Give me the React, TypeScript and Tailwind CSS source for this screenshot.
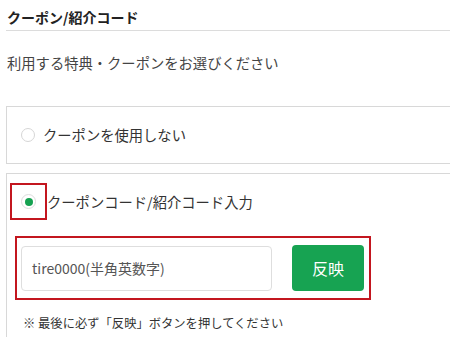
import React from "react";

export default function App() {
  const font = { fontFamily: '"Noto Sans CJK JP", "Noto Sans", sans-serif' };
  return (
    <div className="w-[450px] h-[337px] overflow-hidden bg-white" style={font}>
      <div className="w-[480px] pl-[6px]">
        <div className="h-[31px] border-b border-[#dcdcdc] pl-[1px] pt-[4px]">
          <span className="text-[14px] font-bold text-[#222] leading-[20px]">クーポン/紹介コード</span>
        </div>
        <div className="pl-[1px] pt-[22px] text-[14.3px] leading-[20px] text-[#444]">
          利用する特典・クーポンをお選びください
        </div>
        <div className="mt-[33px] h-[58px] border border-[#d8d8d8] flex items-center pl-[14px]">
          <span className="w-[14px] h-[14px] rounded-full border border-[#d6d6d6] bg-white" />
          <span className="ml-[8px] text-[14.3px] text-[#333] leading-[20px]">クーポンを使用しない</span>
        </div>
        <div className="mt-[9px] border-t border-l border-[#d8d8d8] pt-[9px] pl-[3px] h-[200px]">
          <div className="flex items-center">
            <div className="w-[37px] h-[37px] border-[2px] border-[#c3161f] flex items-center justify-center">
              <span className="w-[15px] h-[15px] rounded-full border border-[#dcdcdc] flex items-center justify-center bg-white">
                <span className="w-[8px] h-[8px] rounded-full bg-[#15a150]" />
              </span>
            </div>
            <span className="ml-[0px] text-[14.3px] text-[#333] leading-[20px]">クーポンコード/紹介コード入力</span>
          </div>
          <div className="mt-[16px] ml-[5px] w-[356px] h-[64px] border-[2px] border-[#c3161f] flex items-center pl-[4px] pr-[4px] gap-[20px]">
            <div className="w-[251px] h-[45px] border border-[#dedede] rounded-[4px] flex items-center pl-[10px] text-[14px] text-[#555]">
              tire0000(半角英数字)
            </div>
            <div className="w-[72px] h-[46px] rounded-[4px] bg-[#17a352] flex items-center justify-center text-white text-[16px]">
              反映
            </div>
          </div>
          <div className="mt-[14px] pl-[13px] text-[12.3px] leading-[18px] text-[#333]">
            ※ 最後に必ず「反映」ボタンを押してください
          </div>
        </div>
      </div>
    </div>
  );
}
